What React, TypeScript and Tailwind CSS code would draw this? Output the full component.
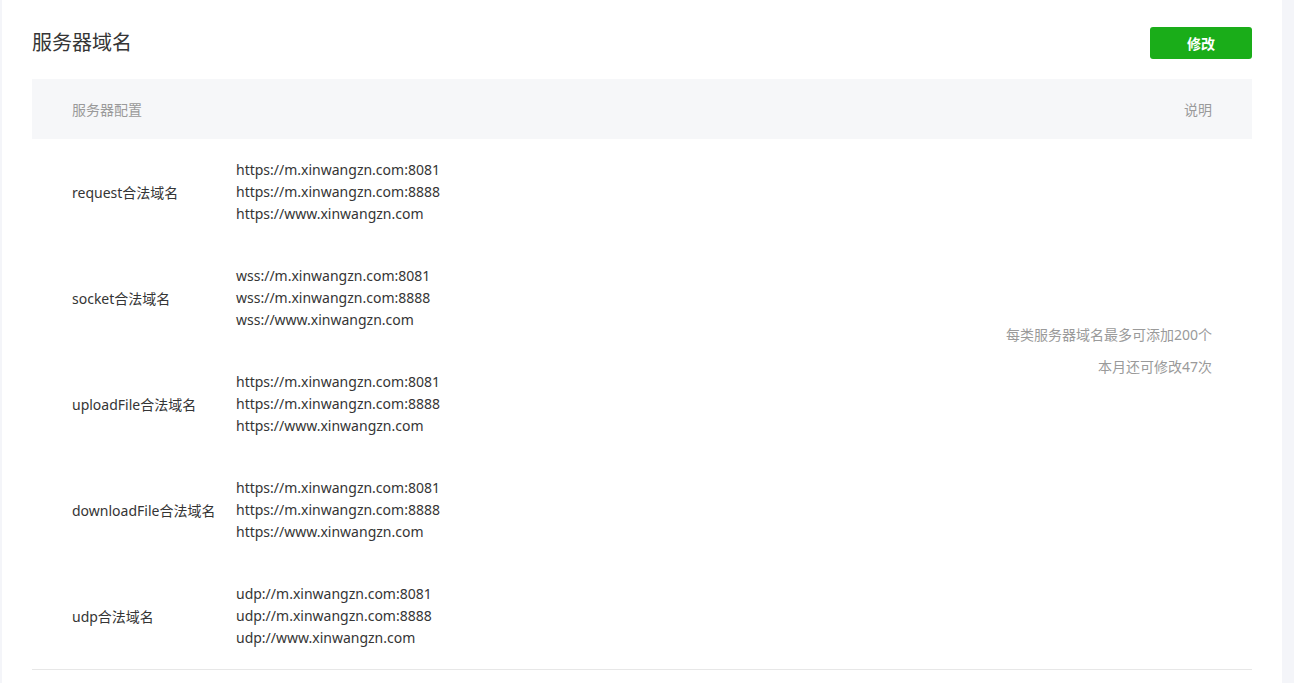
const domainGroups = [
  {
    label: "request合法域名",
    urls: ["https://m.xinwangzn.com:8081", "https://m.xinwangzn.com:8888", "https://www.xinwangzn.com"],
  },
  {
    label: "socket合法域名",
    urls: ["wss://m.xinwangzn.com:8081", "wss://m.xinwangzn.com:8888", "wss://www.xinwangzn.com"],
  },
  {
    label: "uploadFile合法域名",
    urls: ["https://m.xinwangzn.com:8081", "https://m.xinwangzn.com:8888", "https://www.xinwangzn.com"],
  },
  {
    label: "downloadFile合法域名",
    urls: ["https://m.xinwangzn.com:8081", "https://m.xinwangzn.com:8888", "https://www.xinwangzn.com"],
  },
  {
    label: "udp合法域名",
    urls: ["udp://m.xinwangzn.com:8081", "udp://m.xinwangzn.com:8888", "udp://www.xinwangzn.com"],
  },
]

export default function App() {
  return (
    <div
      className="min-h-[683px] bg-[#f4f5f9] pl-[2px] pr-[12px]"
      style={{ fontFamily: '"Noto Sans", "Noto Sans CJK SC", sans-serif' }}
    >
      <div className="min-h-[683px] bg-white px-[30px] pt-[27px]">
        {/* Title bar */}
        <div className="flex h-[32px] items-center justify-between">
          <h2 className="text-[20px] font-normal text-[#353535]">服务器域名</h2>
          <button className="h-[32px] w-[102px] rounded-[3px] bg-[#1aad19] text-[14px] font-bold text-white">
            修改
          </button>
        </div>

        {/* Table */}
        <div className="mt-[20px]">
          <div className="flex h-[60px] items-center justify-between bg-[#f6f7f9] px-[40px] text-[14px] text-[#9a9a9a]">
            <span>服务器配置</span>
            <span>说明</span>
          </div>
          <div className="flex border-b border-[#e7e7e7]">
            <div className="flex-1 pl-[40px]">
              {domainGroups.map((group) => (
                <div key={group.label} className="flex h-[106px] items-center text-[14px] text-[#353535]">
                  <div className="w-[164px]">{group.label}</div>
                  <div className="leading-[22px]">
                    {group.urls.map((url) => (
                      <div key={url}>{url}</div>
                    ))}
                  </div>
                </div>
              ))}
            </div>
            <div className="pr-[40px] pt-[180px] text-right text-[14px] leading-[32px] text-[#9a9a9a]">
              <p>每类服务器域名最多可添加200个</p>
              <p>本月还可修改47次</p>
            </div>
          </div>
        </div>
      </div>
    </div>
  )
}
